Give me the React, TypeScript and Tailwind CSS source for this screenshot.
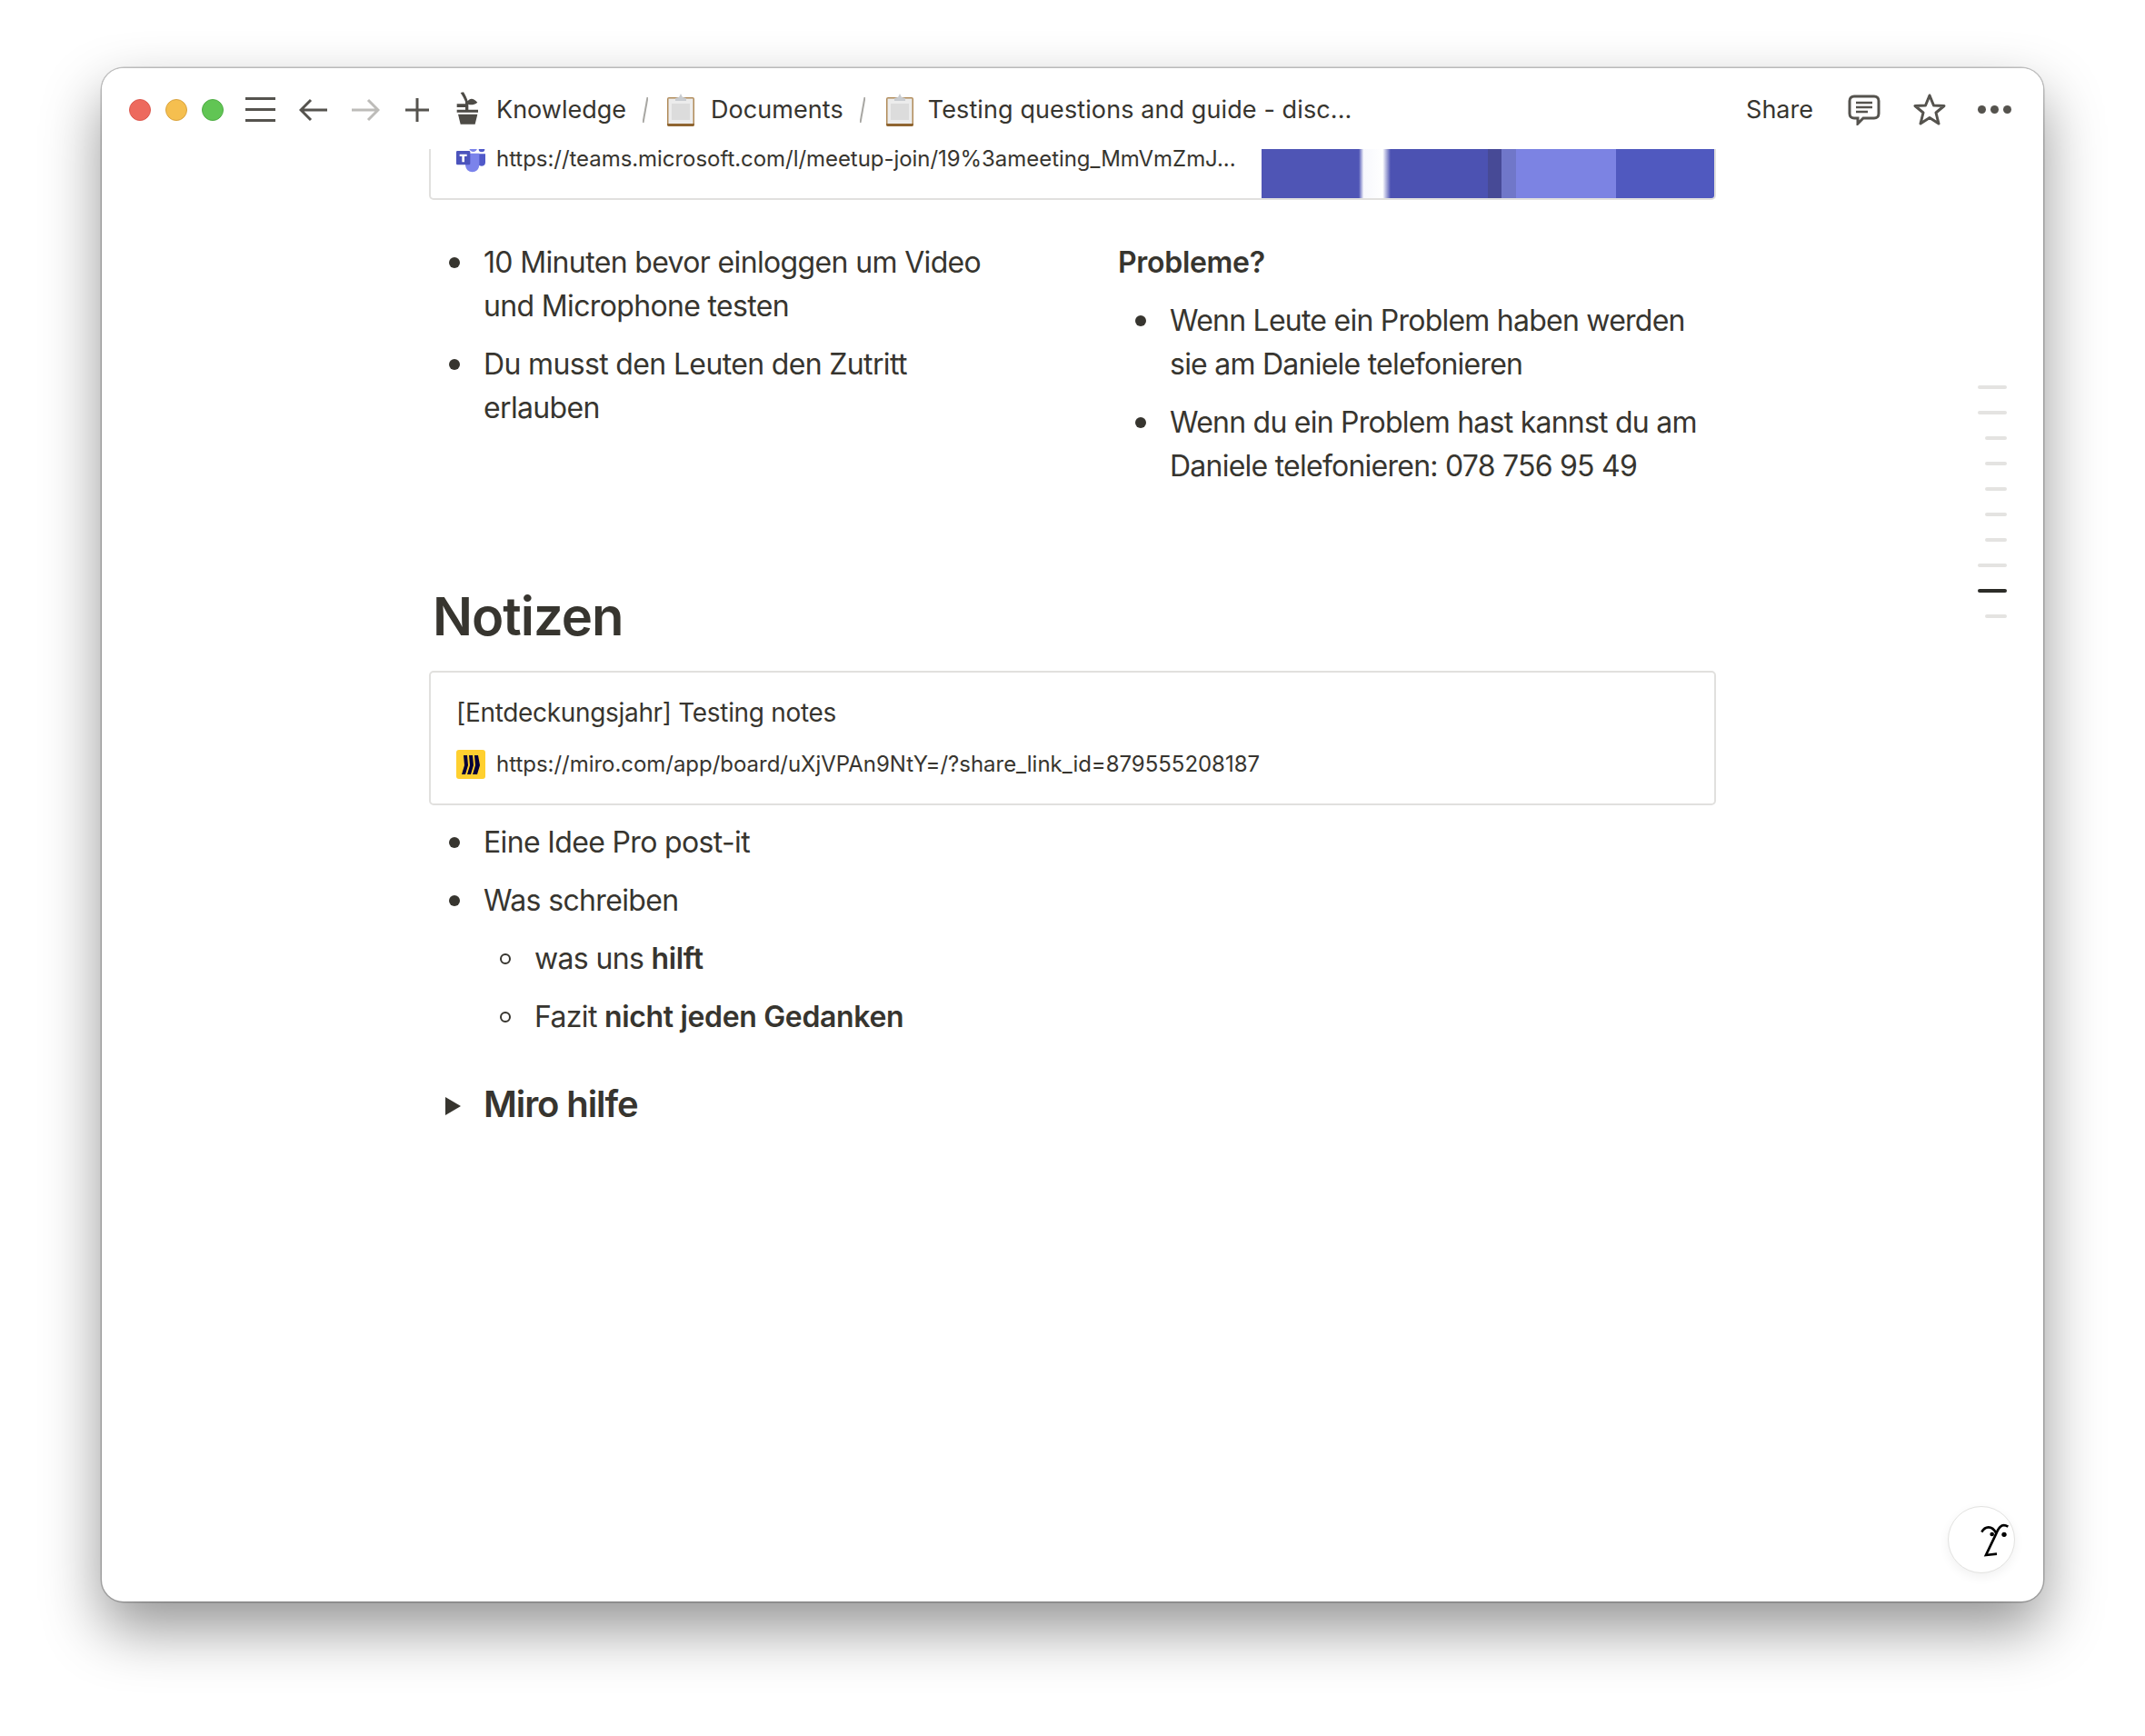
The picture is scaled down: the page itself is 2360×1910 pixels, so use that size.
const FONT = "font-['Inter','Liberation_Sans',sans-serif]"

function Bullet({ children, hollow }: { children: React.ReactNode; hollow?: boolean }) {
  return (
    <div className="flex py-[8px]">
      <div className="flex h-[48px] w-[60px] shrink-0 items-center pl-[22px]">
        {hollow ? (
          <span className="h-[12px] w-[12px] rounded-full border-2 border-[#37352f]" />
        ) : (
          <span className="h-[12px] w-[12px] rounded-full bg-[#37352f]" />
        )}
      </div>
      <div className="min-w-0 flex-1">{children}</div>
    </div>
  )
}

function PlantIcon() {
  return (
    <svg width="24" height="36" viewBox="36 15 72 108" fill="#4d4b46" className="shrink-0">
      <path d="M50 18 L60 16 C66 26 71 36 74 46 C80 36 92 34 106 50 C96 58 84 60 76 56 L76 74 L108 74 L108 83 L38 83 L38 74 L66 74 L66 66 L38 66 L38 55 L66 55 L66 48 C62 36 56 28 50 18 Z" />
      <path d="M42 89 L106 89 L98 122 L50 122 Z" />
    </svg>
  )
}

function ClipboardIcon() {
  return (
    <svg width="32" height="36" viewBox="0 0 32 36" className="shrink-0">
      <rect x="1" y="4" width="30" height="32" rx="2" fill="#b08a58" />
      <rect x="2.5" y="5.5" width="27" height="27.5" fill="#ececec" />
      <rect x="6" y="11" width="20" height="18" fill="#dcdcdc" />
      <path d="M1 33 H31 V34 C31 35 30 36 29 36 H3 C2 36 1 35 1 34 Z" fill="#8f6531" />
      <path d="M10 5 L14 4 L16 0 L18 4 L22 5 L22 8 L10 8 Z" fill="#c9ccd0" />
    </svg>
  )
}

function TeamsIcon() {
  return (
    <svg width="32" height="30" viewBox="36 0 96 90" className="shrink-0">
      <circle cx="92" cy="8" r="13" fill="#7b83eb" />
      <circle cx="120" cy="12" r="10" fill="#5059c9" />
      <path d="M100 28 H132 V56 C132 68 118 72 108 64 Z" fill="#5059c9" />
      <path d="M66 26 H112 V62 C112 96 66 96 66 62 Z" fill="#7b83eb" />
      <rect x="36" y="18" width="46" height="46" rx="4" fill="#4b53bc" />
      <path d="M47 29 H71 V36 H63 V55 H55 V36 H47 Z" fill="#fff" />
    </svg>
  )
}

function MiroIcon() {
  return (
    <svg width="32" height="32" viewBox="0 0 32 32" className="shrink-0">
      <rect width="32" height="32" rx="3" fill="#ffd02f" />
      <path d="M8 6 H12 L13 17 L10 27 H6 L9 17 Z M14 6 H18 L19 17 L16 27 H12 L15 17 Z M20 6 H24 L26 17 L23 27 H18 L21 17 Z" fill="#050038" />
    </svg>
  )
}

function FaceIcon() {
  return (
    <svg width="74" height="74" viewBox="130 110 222 222" fill="none" stroke="#000" strokeWidth="8">
      <path d="M242 196 C252 176 276 172 290 200" />
      <path d="M329 178 C306 164 296 185 288 205 L256 272 L292 268" />
      <circle cx="276" cy="203" r="7" fill="#000" stroke="none" />
      <circle cx="316" cy="204" r="8" fill="#000" stroke="none" />
    </svg>
  )
}

const marks = [
  { long: true },
  { long: true },
  {},
  {},
  {},
  {},
  {},
  { long: true },
  { long: true, active: true },
  {},
]

function Toolbar() {
  return (
    <div className="relative z-10 flex h-[89px] shrink-0 items-center bg-white pl-[30px] pr-[35px] pt-[2px] text-[27px] text-[#37352f]">
      <div className="flex gap-[16px]">
        <span className="h-[24px] w-[24px] rounded-full border border-[#dc5a50] bg-[#ed6a5e]" />
        <span className="h-[24px] w-[24px] rounded-full border border-[#d9a33f] bg-[#f5bf4f]" />
        <span className="h-[24px] w-[24px] rounded-full border border-[#4fad45] bg-[#61c554]" />
      </div>
      <div className="ml-[24px] flex h-[27px] w-[33px] flex-col justify-between">
        <span className="h-[3px] bg-[#55534e]" />
        <span className="h-[3px] bg-[#55534e]" />
        <span className="h-[3px] bg-[#55534e]" />
      </div>
      <svg className="ml-[26px]" width="32" height="26" viewBox="0 0 32 26" fill="none" stroke="#55534e" strokeWidth="3">
        <path d="M13 2 L2 13 L13 24 M2 13 H31" />
      </svg>
      <svg className="ml-[25px]" width="32" height="26" viewBox="0 0 32 26" fill="none" stroke="#bdbcb9" strokeWidth="3">
        <path d="M19 2 L30 13 L19 24 M30 13 H1" />
      </svg>
      <svg className="ml-[27px]" width="28" height="28" viewBox="0 0 28 28" fill="none" stroke="#55534e" strokeWidth="3">
        <path d="M14 1 V27 M1 14 H27" />
      </svg>
      <div className="ml-[29px] flex -translate-y-[2px]"><PlantIcon /></div>
      <span className="ml-[20px] translate-y-[1px]">Knowledge</span>
      <svg className="ml-[18px]" width="6" height="28" viewBox="0 0 6 28" stroke="#a8a7a3" strokeWidth="2"><path d="M5.5 0 L0.5 28" /></svg>
      <div className="ml-[20px] flex"><ClipboardIcon /></div>
      <span className="ml-[17px] translate-y-[1px] tracking-[0.06px]">Documents</span>
      <svg className="ml-[18px]" width="6" height="28" viewBox="0 0 6 28" stroke="#a8a7a3" strokeWidth="2"><path d="M5.5 0 L0.5 28" /></svg>
      <div className="ml-[22px] flex"><ClipboardIcon /></div>
      <span className="ml-[15px] translate-y-[1px] tracking-[0.1px]">Testing questions and guide - disc...</span>
      <span className="ml-auto translate-y-[1px]">Share</span>
      <svg className="ml-[38px]" width="36" height="34" viewBox="0 0 36 34" fill="none" stroke="#55534e" strokeWidth="3">
        <path d="M7 2 H29 C32 2 34 4 34 7 V21 C34 24 32 26 29 26 H17 L11 32 V26 H7 C4 26 2 24 2 21 V7 C2 4 4 2 7 2 Z" />
        <path d="M9 9 H27 M9 14 H27 M9 19 H22" strokeWidth="2.5" />
      </svg>
      <svg className="ml-[36px]" width="36" height="35" viewBox="0 0 36 35" fill="none" stroke="#55534e" strokeWidth="3" strokeLinejoin="round">
        <path d="M18 2 L22.5 13 L34 13.5 L25 21 L28 33 L18 26.5 L8 33 L11 21 L2 13.5 L13.5 13 Z" />
      </svg>
      <div className="ml-[35px] flex gap-[5px]">
        <span className="h-[9px] w-[9px] rounded-full bg-[#55534e]" />
        <span className="h-[9px] w-[9px] rounded-full bg-[#55534e]" />
        <span className="h-[9px] w-[9px] rounded-full bg-[#55534e]" />
      </div>
    </div>
  )
}

export default function App() {
  return (
    <div className={`h-[1910px] w-[2360px] overflow-hidden bg-white pl-[112px] pt-[75px] ${FONT}`}>
      <div className="relative flex h-[1687px] w-[2136px] flex-col overflow-hidden rounded-[24px] bg-white shadow-[0_0_0_1.5px_rgba(0,0,0,0.22),0_30px_65px_rgba(0,0,0,0.42)]">
        <Toolbar />
        <div className="mx-auto w-[1416px] text-[32px] leading-[48px] tracking-[-0.65px] text-[#37352f]">
          <div className="-mt-[30px] flex h-[86px] overflow-hidden rounded-[5px] border-[2px] border-[#e1e0de]">
            <div className="flex min-w-0 flex-1 items-center self-start pl-[28px] pt-[21px] tracking-[-0.05px]">
              <TeamsIcon />
              <span className="ml-[12px] whitespace-nowrap text-[24px] leading-[36px]">https://teams.microsoft.com/l/meetup-join/19%3ameeting_MmVmZmJ...</span>
            </div>
            <div className="flex w-[498px] shrink-0">
              <div className="w-[107px] bg-[#4f55b5]" />
              <div className="w-[35px] bg-[linear-gradient(90deg,#4f55b5,#f7f8fd_15%,#ffffff_75%,#4c52b2)]" />
              <div className="w-[107px] bg-[#4c52b2]" />
              <div className="w-[15px] bg-[#474a96]" />
              <div className="w-[16px] bg-[#7077c9]" />
              <div className="w-[110px] bg-[#7c83e3]" />
              <div className="flex-1 bg-[#5059bf]" />
            </div>
          </div>
          <div className="mt-[37px] flex justify-between">
            <div className="w-[640px]">
              <Bullet>10 Minuten bevor einloggen um Video und Microphone testen</Bullet>
              <Bullet>Du musst den Leuten den Zutritt erlauben</Bullet>
            </div>
            <div className="w-[658px]">
              <div className="py-[8px] font-semibold tracking-[-0.3px]">Probleme?</div>
              <div className="-ml-[3px] tracking-[-0.76px]">
                <Bullet>Wenn Leute ein Problem haben werden sie am Daniele telefonieren</Bullet>
                <Bullet>Wenn du ein Problem hast kannst du am Daniele telefonieren: 078 756 95 49</Bullet>
              </div>
            </div>
          </div>
          <h1 className="mt-[94px] pl-[4px] text-[58px] font-semibold leading-[78px] tracking-[-1px]">Notizen</h1>
          <div className="mt-[21px] h-[148px] rounded-[5px] border-[2px] border-[#e1e0de] pl-[28px] pt-[23px]">
            <div className="text-[28px] leading-[42px] tracking-[-0.32px]">[Entdeckungsjahr] Testing notes</div>
            <div className="mt-[18px] flex items-center gap-[12px] tracking-[-0.03px]">
              <MiroIcon />
              <span className="text-[24px] leading-[36px]">https://miro.com/app/board/uXjVPAn9NtY=/?share_link_id=879555208187</span>
            </div>
          </div>
          <div className="mt-[9px]">
            <Bullet>Eine Idee Pro post-it</Bullet>
            <Bullet>Was schreiben</Bullet>
            <div className="pl-[56px]">
              <Bullet hollow>was uns <b className="font-semibold tracking-[-0.35px]">hilft</b></Bullet>
              <Bullet hollow>Fazit <b className="font-semibold tracking-[-0.35px]">nicht jeden Gedanken</b></Bullet>
            </div>
          </div>
          <div className="mt-[34px] flex items-center">
            <div className="flex w-[60px] translate-y-[2px] pl-[18px]">
              <svg width="17" height="20" viewBox="0 0 17 20" fill="#37352f"><path d="M0 0 L17 10 L0 20 Z" /></svg>
            </div>
            <span className="text-[40px] font-semibold leading-[60px] tracking-[-1.1px]">Miro hilfe</span>
          </div>
        </div>
        <div className="absolute right-[40px] top-[349px] flex flex-col items-end gap-[24px]">
          {marks.map((m, i) => (
            <span
              key={i}
              className={`h-[4px] rounded-full ${m.long ? "w-[32px]" : "w-[24px]"} ${m.active ? "bg-[#2c2c28]" : "bg-[#e4e3e1]"}`}
            />
          ))}
        </div>
        <div className="absolute bottom-[31px] right-[31px] h-[74px] w-[74px] rounded-full border-[1.5px] border-[#e2e2e0] bg-white shadow-[0_4px_12px_rgba(0,0,0,0.06)]">
          <div className="-m-[1.5px]"><FaceIcon /></div>
        </div>
      </div>
    </div>
  )
}
